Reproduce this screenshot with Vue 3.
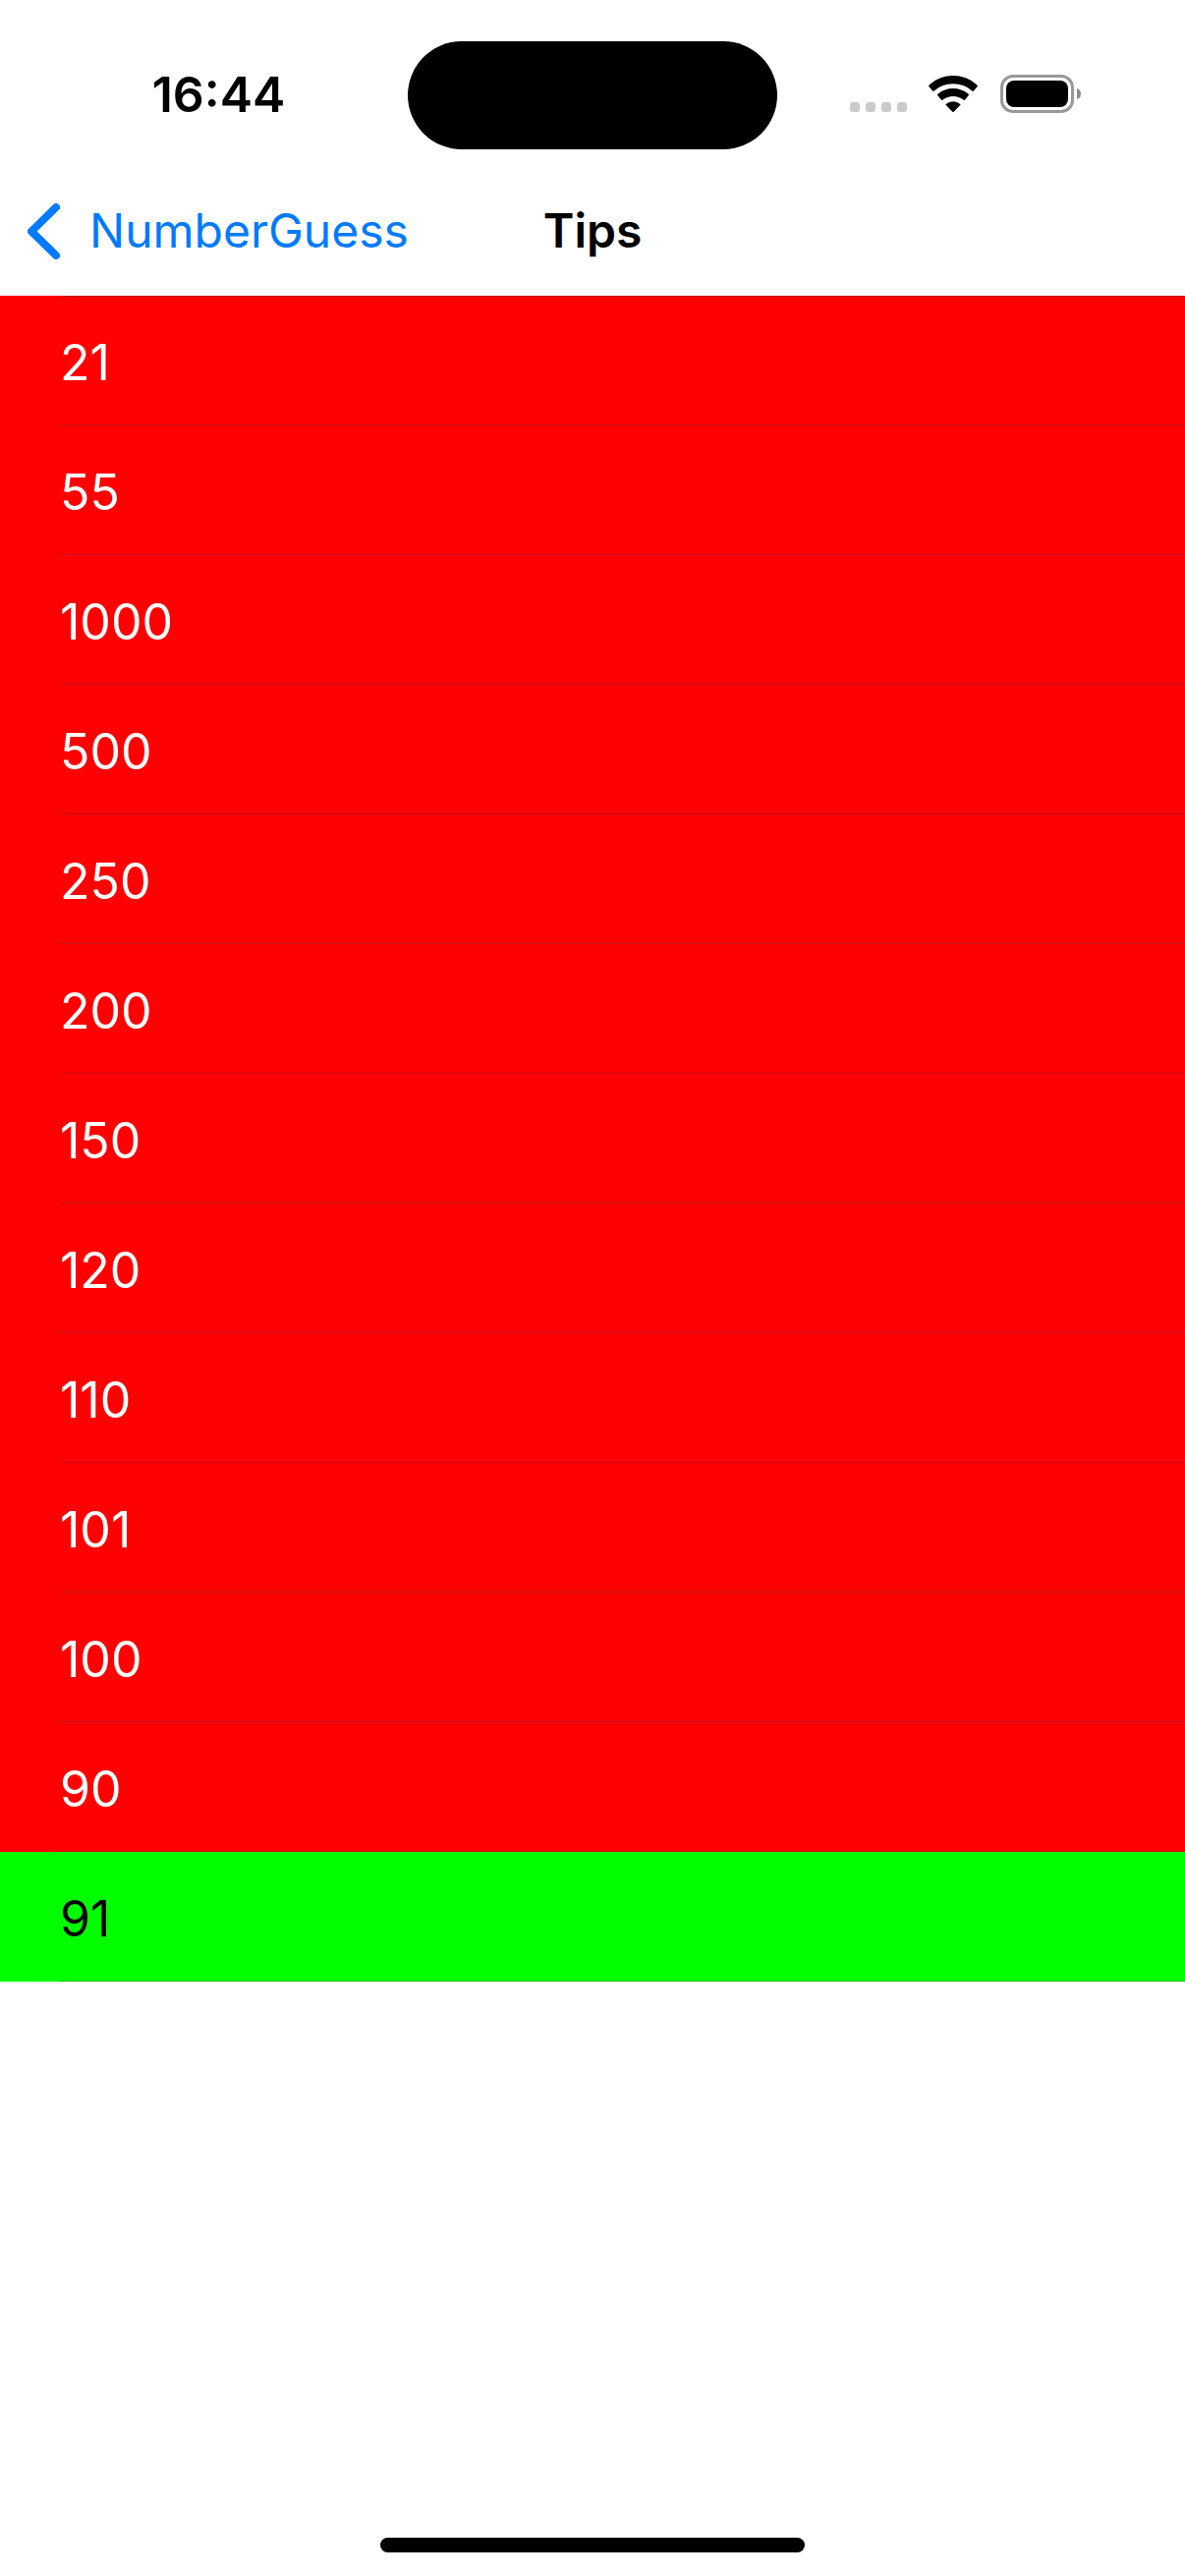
<script setup>
const guesses = [21, 55, 1000, 500, 250, 200, 150, 120, 110, 101, 100, 90, 91]
const answer = 91
</script>

<template>
  <div class="screen">
    <header class="status">
      <time class="clock" datetime="16:44">16:44</time>
      <div class="island"></div>
      <div class="indicators">
        <svg class="cellular" width="58" height="10" viewBox="0 0 58 10" aria-hidden="true">
          <g fill="#cbcbcb">
            <rect x="0" width="10" height="10" rx="3" />
            <rect x="16" width="10" height="10" rx="3" />
            <rect x="32" width="10" height="10" rx="3" />
            <rect x="48" width="10" height="10" rx="3" />
          </g>
        </svg>
        <svg class="wifi" width="50" height="37" viewBox="0 0 150 111" aria-label="Wi-Fi">
          <path d="M0 32Q1 29 3 27.500A108 108 0 0 1 147 27.500Q149 29 150 32L138 46Q136 49 133 46.500A88 88 0 0 0 17 46.500Q14 49 12 46Z" />
          <path d="M27 59Q27 57 29 55.500A72 72 0 0 1 121 55.500Q123 57 123 59L112 73Q109 76 106 73.500A50 50 0 0 0 44 73.500Q41 76 38 73Z" />
          <path d="M53 87A33 33 0 0 1 97 87Q98 89 96 91L77 110Q75 112 73 110L54 91Q52 89 53 87Z" />
        </svg>
        <svg class="battery" width="82" height="39" viewBox="0 0 82 39" aria-label="Battery full">
          <rect x="1.500" y="1.500" width="72" height="36" rx="11.500" fill="none" stroke="#999" stroke-width="3" />
          <rect x="6" y="6" width="63" height="27" rx="8" />
          <path d="M78 14Q82 15 82 19.500Q82 24 78 25Z" fill="#8c8c8c" />
        </svg>
      </div>
    </header>

    <nav class="bar">
      <a class="back" href="#">
        <svg width="33" height="57" viewBox="0 0 33 57" aria-hidden="true">
          <path d="M29 4L4 28.500L29 53" fill="none" stroke="currentColor" stroke-width="8" stroke-linecap="round" stroke-linejoin="round" />
        </svg>
        <span>NumberGuess</span>
      </a>
      <h1 class="title">Tips</h1>
    </nav>

    <ul class="list">
      <li v-for="guess in guesses" :key="guess" class="row" :class="{ correct: guess === answer }">
        <span class="value">{{ guess }}</span>
      </li>
    </ul>

    <div class="home"></div>
  </div>
</template>

<style>
body {
  margin: 0;
  background: #fff;
}
</style>

<style scoped>
.screen {
  display: flex;
  flex-direction: column;
  min-height: 100vh;
  background: #fff;
  color: #000;
  font-family: Inter, "Liberation Sans", sans-serif;
  font-size: 50px;
  line-height: 60px;
}

.status {
  display: grid;
  grid-template-columns: 1fr 376px 1fr;
  align-items: center;
  padding: 42px 0 17px;
}

.clock {
  padding: 0 34px 2px 64px;
  text-align: center;
  font-weight: 600;
}

.island {
  height: 110px;
  border-radius: 55px;
  background: #000;
}

.indicators {
  display: flex;
  align-items: flex-end;
  justify-content: flex-end;
  padding: 0 106px 3px 0;
}

.cellular {
  margin: 0 22px 1px 0;
}

.wifi {
  margin: 0 23px 1px 0;
}

.bar {
  display: grid;
  grid-template-columns: 1fr auto 1fr;
  align-items: center;
  height: 132px;
  padding: 0 28px;
  font-size: 48px;
}

.back {
  display: flex;
  align-items: center;
  gap: 30px;
  color: #007aff;
  text-decoration: none;
}

.title {
  margin: 0;
  font-size: 48px;
  font-weight: 600;
}

.list {
  margin: 0;
  padding: 0;
  list-style: none;
}

.row {
  display: flex;
  height: 132px;
  padding-left: 60px;
  background: #f00;
  color: #fff;
}

.row.correct {
  background: #0f0;
  color: #000;
}

.value {
  display: flex;
  flex: 1;
  align-items: center;
  padding: 4px 0 0 1px;
  border-bottom: 1px solid rgba(60, 60, 67, 0.29);
}

.row:first-child .value {
  border-top: 1px solid rgba(60, 60, 67, 0.29);
}

.home {
  width: 432px;
  height: 15px;
  margin: auto auto 24px;
  border-radius: 8px;
  background: #000;
}
</style>
